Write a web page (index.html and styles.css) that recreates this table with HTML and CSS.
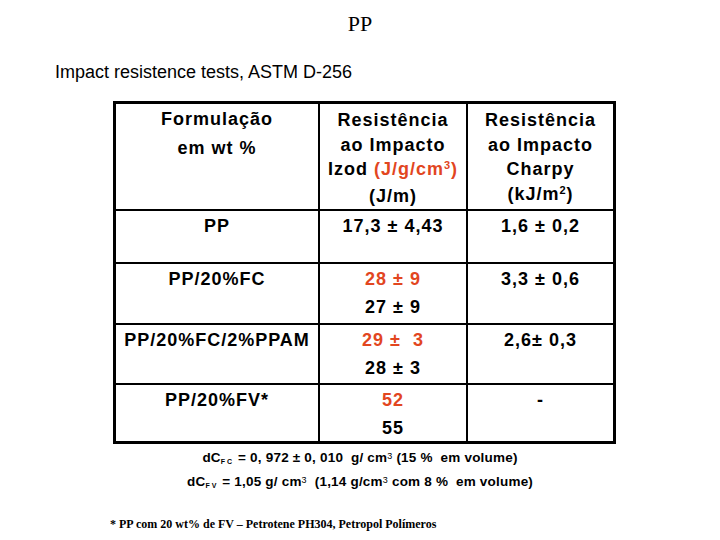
FILE: index.html
```html
<!DOCTYPE html>
<html>
<head>
<meta charset="utf-8">
<link rel="stylesheet" href="styles.css">
</head>
<body>
<div class="slide">
  <h1 class="title">PP</h1>
  <p class="heading">Impact resistence tests, ASTM D-256</p>
  <div class="table">
    <div class="cell head c1">
      <div class="hl1">Formulação</div>
      <div class="hl1">em wt %</div>
    </div>
    <div class="cell head">
      <div class="hl">Resistência</div>
      <div class="hl">ao Impacto</div>
      <div class="hl">Izod <span class="red">(J/g/cm<sup>3</sup>)</span></div>
      <div class="hl last">(J/m)</div>
    </div>
    <div class="cell head">
      <div class="hl">Resistência</div>
      <div class="hl">ao Impacto</div>
      <div class="hl">Charpy</div>
      <div class="hl">(kJ/m<sup>2</sup>)</div>
    </div>

    <div class="cell"><div class="dl">PP</div></div>
    <div class="cell"><div class="dl">17,3 ± 4,43</div></div>
    <div class="cell"><div class="dl">1,6 ± 0,2</div></div>

    <div class="cell"><div class="dl">PP/20%FC</div></div>
    <div class="cell"><div class="dl red">28 ± 9</div><div class="dl">27 ± 9</div></div>
    <div class="cell"><div class="dl">3,3 ± 0,6</div></div>

    <div class="cell"><div class="dl">PP/20%FC/2%PPAM</div></div>
    <div class="cell"><div class="dl red">29 ±&nbsp; 3</div><div class="dl">28 ± 3</div></div>
    <div class="cell"><div class="dl">2,6± 0,3</div></div>

    <div class="cell"><div class="dl">PP/20%FV*</div></div>
    <div class="cell"><div class="dl red">52</div><div class="dl">55</div></div>
    <div class="cell"><div class="dl">-</div></div>
  </div>
  <div class="notes">
    <p class="note">dC<sub>FC</sub> = 0, 972 ± 0, 010&nbsp; g/ cm<span class="s3">3</span> (15 %&nbsp; em volume)</p>
    <p class="note">dC<sub>FV</sub> = 1,05 g/ cm<span class="s3">3</span>&nbsp; (1,14 g/cm<span class="s3">3</span> com 8 %&nbsp; em volume)</p>
  </div>
  <p class="foot">* PP com 20 wt% de FV – Petrotene PH304, Petropol Polímeros</p>
</div>
</body>
</html>
```
FILE: styles.css
```css
html, body {
  margin: 0;
  padding: 0;
  background: #ffffff;
  color: #000000;
}
.slide {
  width: 720px;
  height: 540px;
  overflow: hidden;
}
.title {
  margin: 0;
  padding-top: 12px;
  font-family: "Liberation Serif", serif;
  font-weight: normal;
  font-size: 22px;
  line-height: 24px;
  text-align: center;
}
.heading {
  margin: 26px 0 0 55px;
  font-family: "Liberation Sans", Arial, sans-serif;
  font-size: 18px;
  line-height: 20px;
}
.table {
  margin: 19px 0 0 113px;
  width: 497px;
  border: 3px solid #000;
  background: #000;
  display: grid;
  grid-template-columns: 202px 146px 145px;
  grid-template-rows: 105px 51px 59px 58px 56px;
  gap: 2px;
  font-family: "Liberation Sans", Arial, sans-serif;
  font-weight: bold;
  font-size: 18px;
  letter-spacing: 1px;
}
.cell {
  background: #fff;
  text-align: center;
  padding-top: 1px;
}
.head {
  padding-top: 4px;
}
.hl1 {
  line-height: 29px;
}
.c1 .hl1:first-child {
  line-height: 22px;
  margin-bottom: 4px;
}
.c1 {
  padding-top: 4px;
}
.hl {
  line-height: 24.5px;
}
.hl.last {
  padding-top: 2px;
}
sup {
  font-size: 11px;
  line-height: 0;
  vertical-align: 6px;
}
.dl {
  line-height: 28px;
}
.red {
  color: #e2461f;
}
.notes {
  margin-top: 2px;
  font-family: "Liberation Sans", Arial, sans-serif;
  font-weight: bold;
  font-size: 13.5px;
  letter-spacing: 0.2px;
}
.note {
  margin: 0;
  line-height: 24px;
  text-align: center;
}
sub {
  font-size: 7px;
  line-height: 0;
  vertical-align: -2px;
  letter-spacing: 2px;
}
.s3 {
  font-size: 9px;
  font-weight: normal;
  line-height: 0;
  vertical-align: 3px;
}
.foot {
  margin: 22px 0 0 110px;
  font-family: "Liberation Serif", serif;
  font-weight: bold;
  font-size: 12px;
  line-height: 16px;
}
```
